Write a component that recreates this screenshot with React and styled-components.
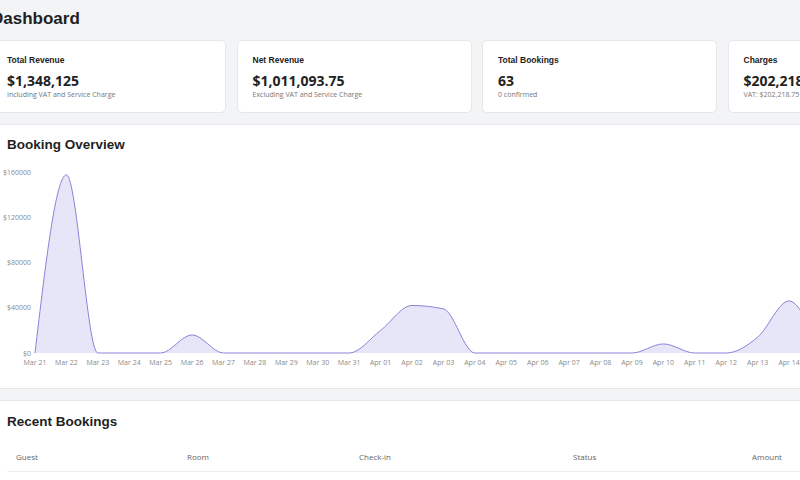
import React from 'react';
import styled, { createGlobalStyle } from 'styled-components';

const GlobalStyle = createGlobalStyle`
  html, body {
    margin: 0;
    padding: 0;
    background: #f3f4f6;
    overflow: hidden;
  }
`;

const Page = styled.div`
  width: 971.5px;
  margin-left: -9px;
  padding-top: 9px;
  font-family: "Open Sans", sans-serif;
  color: #222;
`;

const Title = styled.h1`
  margin: 0 0 11px;
  font-family: "Liberation Sans", Arial, sans-serif;
  font-size: 17px;
  line-height: 20px;
  font-weight: 700;
  color: #1f1f1f;
`;

const StatsGrid = styled.div`
  display: grid;
  grid-template-columns: repeat(4, 1fr);
  gap: 10.5px;
  margin-bottom: 11px;
`;

const Card = styled.div`
  background: #fff;
  border: 1px solid #e5e7eb;
  border-radius: 5px;
  padding: ${(p) => p.$pad || '13px 15px'};
  box-sizing: border-box;
`;

const StatCard = styled(Card)`
  height: 73px;
`;

const StatTitle = styled.div`
  font-family: "Liberation Sans", Arial, sans-serif;
  font-size: 8.5px;
  line-height: 10px;
  font-weight: 700;
  color: #222;
  margin-top: 1px;
  margin-bottom: 6px;
`;

const StatValue = styled.div`
  font-size: 14px;
  line-height: 19px;
  font-weight: 700;
  color: #222;
  white-space: nowrap;
`;

const StatSub = styled.div`
  font-size: 7px;
  line-height: 9px;
  color: #777;
  white-space: nowrap;
`;

const Section = styled(Card)`
  margin-bottom: 11px;
  border-radius: 4px;
`;

const SectionTitle = styled.h2`
  margin: 0;
  font-family: "Liberation Sans", Arial, sans-serif;
  font-size: 13.5px;
  line-height: 16px;
  font-weight: 700;
  color: #1f1f1f;
`;

const ChartWrap = styled.div`
  margin: 4px -15px 0;
  height: 220px;

  svg {
    display: block;
    overflow: visible;
  }
`;

const Table = styled.div`
  margin-top: 13px;
  font-size: 8px;
`;

const TableRow = styled.div`
  display: grid;
  grid-template-columns: 171px 172px 214px 179px 1fr;
  border-bottom: 1px solid #eceef1;
  color: ${(p) => (p.$head ? '#666' : '#333')};
`;

const Cell = styled.div`
  padding: 8px 9px 9px;
  line-height: 11px;
  white-space: nowrap;
`;

const stats = [
  { title: 'Total Revenue', value: '$1,348,125', sub: 'Including VAT and Service Charge' },
  { title: 'Net Revenue', value: '$1,011,093.75', sub: 'Excluding VAT and Service Charge' },
  { title: 'Total Bookings', value: '63', sub: '0 confirmed' },
  { title: 'Charges', value: '$202,218.75', sub: 'VAT: $202,218.75 | Service: $134,812.50' },
];

const days = [
  'Mar 21', 'Mar 22', 'Mar 23', 'Mar 24', 'Mar 25', 'Mar 26', 'Mar 27', 'Mar 28', 'Mar 29', 'Mar 30',
  'Mar 31', 'Apr 01', 'Apr 02', 'Apr 03', 'Apr 04', 'Apr 05', 'Apr 06', 'Apr 07', 'Apr 08', 'Apr 09',
  'Apr 10', 'Apr 11', 'Apr 12', 'Apr 13', 'Apr 14', 'Apr 15', 'Apr 16', 'Apr 17', 'Apr 18', 'Apr 19',
];
const values = [
  0, 157500, 0, 0, 0, 16000, 0, 0, 0, 0,
  0, 20000, 42000, 39000, 0, 0, 0, 0, 0, 0,
  8000, 0, 0, 14000, 46000, 12000, 0, 0, 0, 0,
];

const bookings = [
  { guest: 'Daniel Mensah', room: 'Deluxe 204', checkin: 'Apr 14, 2025', status: 'pending', amount: '$4,200' },
  { guest: 'Grace Owusu', room: 'Suite 301', checkin: 'Apr 13, 2025', status: 'pending', amount: '$7,850' },
];

// d3 monotoneX, same curve recharts uses for type="monotone"
const monotonePath = (pts) => {
  const n = pts.length;
  const sign = (v) => (v < 0 ? -1 : 1);
  const t = new Array(n).fill(0);
  for (let i = 1; i < n - 1; i++) {
    const h0 = pts[i][0] - pts[i - 1][0];
    const h1 = pts[i + 1][0] - pts[i][0];
    const s0 = (pts[i][1] - pts[i - 1][1]) / h0;
    const s1 = (pts[i + 1][1] - pts[i][1]) / h1;
    const p = (s0 * h1 + s1 * h0) / (h0 + h1);
    t[i] = (sign(s0) + sign(s1)) * Math.min(Math.abs(s0), Math.abs(s1), 0.5 * Math.abs(p)) || 0;
  }
  const hA = pts[1][0] - pts[0][0];
  t[0] = ((3 * (pts[1][1] - pts[0][1])) / hA - t[1]) / 2;
  const hB = pts[n - 1][0] - pts[n - 2][0];
  t[n - 1] = ((3 * (pts[n - 1][1] - pts[n - 2][1])) / hB - t[n - 2]) / 2;

  let d = `M${pts[0][0]},${pts[0][1]}`;
  for (let i = 0; i < n - 1; i++) {
    const [x0, y0] = pts[i];
    const [x1, y1] = pts[i + 1];
    const dx = (x1 - x0) / 3;
    d += `C${x0 + dx},${y0 + dx * t[i]},${x1 - dx},${y1 - dx * t[i + 1]},${x1},${y1}`;
  }
  return d;
};

const BookingChart = () => {
  const x0 = 43;
  const step = 31.42;
  const base = 196;
  const top = 15;
  const scale = (v) => base - (v / 160000) * (base - top);
  const pts = values.map((v, i) => [x0 + i * step, scale(v)]);
  const line = monotonePath(pts);
  const area = `${line}L${pts[pts.length - 1][0]},${base}L${pts[0][0]},${base}Z`;
  const ticks = [0, 40000, 80000, 120000, 160000];

  return (
    <svg width="969" height="220" fontFamily="Open Sans, sans-serif" fontSize="7">
      {ticks.map((v) => (
        <text key={v} x="39" y={scale(v) + 2.5} textAnchor="end" fill="#8a8a8a">
          ${v}
        </text>
      ))}
      <path d={area} fill="#e7e6f8" stroke="none" />
      <path d={line} fill="none" stroke="#8884d8" strokeWidth="1" />
      {days.map((d, i) => (
        <text key={d} x={x0 + i * step} y="207.5" textAnchor="middle" fill="#8a8a8a">
          {d}
        </text>
      ))}
    </svg>
  );
};

export default function App() {
  return (
    <>
      <GlobalStyle />
      <Page>
        <Title>Dashboard</Title>
        <StatsGrid>
          {stats.map((s) => (
            <StatCard key={s.title}>
              <StatTitle>{s.title}</StatTitle>
              <StatValue>{s.value}</StatValue>
              <StatSub>{s.sub}</StatSub>
            </StatCard>
          ))}
        </StatsGrid>

        <Section $pad="12px 15px 11px">
          <SectionTitle>Booking Overview</SectionTitle>
          <ChartWrap>
            <BookingChart />
          </ChartWrap>
        </Section>

        <Section $pad="13px 15px 12px">
          <SectionTitle>Recent Bookings</SectionTitle>
          <Table>
            <TableRow $head>
              <Cell>Guest</Cell>
              <Cell>Room</Cell>
              <Cell>Check-in</Cell>
              <Cell>Status</Cell>
              <Cell>Amount</Cell>
            </TableRow>
            {bookings.map((b) => (
              <TableRow key={b.guest}>
                <Cell>{b.guest}</Cell>
                <Cell>{b.room}</Cell>
                <Cell>{b.checkin}</Cell>
                <Cell>{b.status}</Cell>
                <Cell>{b.amount}</Cell>
              </TableRow>
            ))}
          </Table>
        </Section>
      </Page>
    </>
  );
}
